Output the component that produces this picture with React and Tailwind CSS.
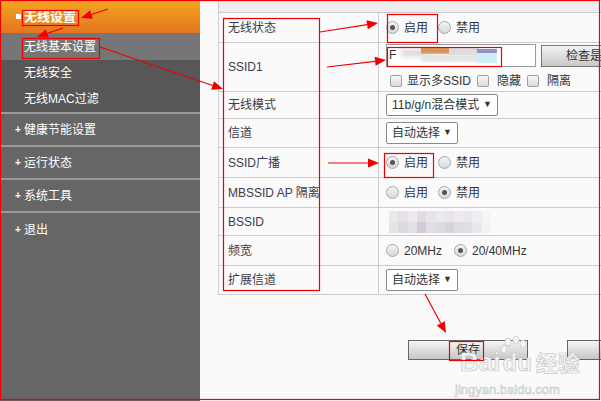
import React from 'react'

const font = { fontFamily: '"Liberation Sans", "Noto Sans CJK SC", sans-serif' }

function Radio({ on }) {
  return (
    <span className="inline-flex items-center justify-center w-[13px] h-[13px] rounded-full border border-[#a8a8a8] bg-gradient-to-b from-[#f4f4f4] to-[#d8d8d8]">
      {on && <span className="w-[5px] h-[5px] rounded-full bg-[#555]" />}
    </span>
  )
}

function Check() {
  return <span className="inline-block w-[12px] h-[12px] rounded-[2px] border border-[#a0a0a0] bg-gradient-to-b from-[#f6f6f6] to-[#dcdcdc]" />
}

function Select({ label, w }) {
  return (
    <div className={`${w} h-[22px] border border-[#8a8a8a] rounded-[2px] bg-white flex items-center justify-between px-[5px] text-[12px] text-[#333] whitespace-nowrap`}>
      <span>{label}</span>
      <span className="text-[9px]">▼</span>
    </div>
  )
}

function RadioPair({ a, b, first, gap = 'gap-[10px]' }) {
  return (
    <div className={`flex items-center ${gap} text-[12px] text-[#333]`}>
      <span className="flex items-center gap-[5px]"><Radio on={first} />{a}</span>
      <span className="flex items-center gap-[5px]"><Radio on={!first} />{b}</span>
    </div>
  )
}

const rows = [
  ['无线状态', 'h-[30px]', <div className="pl-[7px]"><RadioPair a="启用" b="禁用" first /></div>],
  ['SSID1', 'h-[49px]', (
    <div className="pl-[7px] flex flex-col gap-[5px]">
      <div className="flex gap-[5px] items-center">
        <div className="relative w-[150px] h-[23px] border border-[#999] bg-white overflow-hidden text-[12px] text-[#333] pl-[2px] leading-[21px]">
          F
          <div className="absolute left-[14px] top-[4px] w-[30px] h-[8px] bg-[#ddd] blur-[2px]" />
          <div className="absolute left-[34px] top-[3px] w-[28px] h-[6px] bg-[#d7965a]" />
          <div className="absolute left-[34px] top-[9px] w-[60px] h-[8px] bg-[#e6e6e6] blur-[1px]" />
          <div className="absolute left-[62px] top-[3px] w-[30px] h-[7px] bg-[#ddd]" />
          <div className="absolute left-[90px] top-[5px] w-[20px] h-[13px] bg-[#cfeef8]" />
          <div className="absolute left-[90px] top-[4px] w-[20px] h-[4px] bg-[#8d95c8]" />
        </div>
        <div className="w-[70px] h-[22px] border border-[#777] bg-gradient-to-b from-[#f4f4f4] to-[#c8c8c8] text-[12px] text-[#333] pl-[24px] leading-[20px] whitespace-nowrap overflow-hidden">检查是否冲突</div>
      </div>
      <div className="flex items-center text-[12px] text-[#333] pl-[4px]">
        <Check /><span className="ml-[5px] mr-[6px]">显示多SSID</span>
        <Check /><span className="ml-[8px] mr-[6px]">隐藏</span>
        <Check /><span className="ml-[8px]">隔离</span>
      </div>
    </div>
  )],
  ['无线模式', 'h-[27px]', <div className="pl-[7px]"><Select label="11b/g/n混合模式" w="w-[112px]" /></div>],
  ['信道', 'h-[29px]', <div className="pl-[7px]"><Select label="自动选择" w="w-[72px]" /></div>],
  ['SSID广播', 'h-[30px]', <div className="pl-[7px]"><RadioPair a="启用" b="禁用" first /></div>],
  ['MBSSID AP 隔离', 'h-[30px]', <div className="pl-[7px]"><RadioPair a="启用" b="禁用" first={false} /></div>],
  ['BSSID', 'h-[28px]', (
    <div className="pl-[10px] grid grid-cols-11 w-[112px] h-[22px] blur-[0.5px]">
      {['#ebe9ec', '#e4e2e6', '#ece8ec', '#e0dce2', '#e6e4e8', '#ece9ee', '#e8e6ea', '#eeeaef', '#e9e8ec', '#f0eef1', '#f5f4f6',
        '#e6e4e8', '#ddd9df', '#e3e0e6', '#d2cad4', '#e0dde3', '#dddbe0', '#d6d4da', '#dfdde2', '#e1dfe4', '#e9e8ec', '#f4f3f5'].map((c, i) => (
        <span key={i} style={{ background: c }} />
      ))}
    </div>
  )],
  ['频宽', 'h-[30px]', <div className="pl-[7px]"><RadioPair a="20MHz" b="20/40MHz" first={false} gap="gap-[12px]" /></div>],
  ['扩展信道', 'h-[28px]', <div className="pl-[7px]"><Select label="自动选择" w="w-[72px]" /></div>],
]

function arrow(x1, y1, x2, y2, len = 11, half = 4.5) {
  const dx = x2 - x1, dy = y2 - y1
  const d = Math.hypot(dx, dy)
  const ux = dx / d, uy = dy / d
  const bx = x2 - ux * len, by = y2 - uy * len
  const pts = `${x2},${y2} ${bx - uy * half},${by + ux * half} ${bx + uy * half},${by - ux * half}`
  return { bx, by, pts }
}

const arrows = [
  [108, 9, 81, 18],
  [63, 28, 37, 37],
  [100, 47, 223, 89],
  [320, 32, 378, 23],
  [327, 67, 386, 60],
  [328, 163, 379, 163],
  [425, 294, 446, 333],
]

const boxes = [
  [22, 10, 56, 15],
  [22, 38, 77, 20],
  [223, 18, 96, 272],
  [387, 14, 50, 28],
  [387, 47, 114, 19],
  [384, 153, 49, 24],
  [449, 341, 34, 19],
]

export default function App() {
  return (
    <div className="relative w-[601px] h-[401px] overflow-hidden flex bg-[#fafafa]" style={font}>
      <aside className="w-[200px] shrink-0 bg-[#666] text-white text-[12px]">
        <div className="h-[33px] bg-gradient-to-b from-[#f2a71f] to-[#e6741f] flex items-center pl-[16px] font-bold text-[13px]">
          <span className="w-[5px] h-[5px] bg-white mr-[3px]" />无线设置
        </div>
        <div className="bg-[#575757] border-b-2 border-[#9a9a9a]">
          <div className="h-[27px] bg-[#767676] flex items-center pl-[24px]">无线基本设置</div>
          <div className="h-[26px] flex items-center pl-[24px]">无线安全</div>
          <div className="h-[26px] flex items-center pl-[24px]">无线MAC过滤</div>
        </div>
        {['健康节能设置', '运行状态', '系统工具', '退出'].map((t, i) => (
          <div key={t} className={`h-[33px] flex items-center pl-[15px] ${i < 3 ? 'border-b-2 border-[#999]' : ''}`}>
            <span className="w-[8px] text-[10px] font-bold">+</span>
            <span className="ml-[1px]">{t}</span>
          </div>
        ))}
      </aside>

      <main className="flex-1 pl-[18px] overflow-hidden">
        <div className="w-[400px] border-l border-b border-[#ccc] text-[12px] text-[#3c3c4a]">
          <div className="h-[13px] bg-[#eeeeee] border-b border-[#ccc] overflow-hidden pl-[10px]">
            <div className="-mt-[10px] leading-[12px] text-[#555]">无线网络</div>
          </div>
          {rows.map(([label, h, value]) => (
            <div key={label} className={`${h} grid grid-cols-[160px_1fr] border-b border-[#ccc] last:border-b-0`}>
              <div className="border-r border-[#ccc] flex items-center pl-[9px]">{label}</div>
              <div className="flex items-center">{value}</div>
            </div>
          ))}
        </div>
        <div className="flex mt-[45px] gap-[39px] pl-[190px]">
          <div className="w-[120px] h-[20px] shrink-0 border border-[#666] bg-gradient-to-b from-[#f6f6f6] to-[#c6c6c6] text-[12px] text-[#333] flex items-center justify-center leading-none">保存</div>
          <div className="w-[60px] h-[20px] shrink-0 border border-[#666] bg-gradient-to-b from-[#f6f6f6] to-[#c6c6c6]" />
        </div>
      </main>

      <div className="absolute left-[460px] top-[349px] flex items-end text-[26px] font-bold leading-none text-[#f4f4f4] [-webkit-text-stroke:0.7px_#c8c8c8]">
        <span>Bai</span>
        <span className="text-[24px] ml-[2px]">du</span>
        <span className="text-[22px] ml-[4px]">经验</span>
      </div>
      <div className="absolute left-[455px] top-[383px] text-[13px] text-[#eeeeee] [-webkit-text-stroke:0.5px_#c4c4c4] leading-none">jingyan.baidu.com</div>
      <svg className="absolute left-[500px] top-[336px]" width="30" height="26" viewBox="0 0 30 26">
        <g fill="#f4f4f4" stroke="#c8c8c8" strokeWidth="0.8">
          <ellipse cx="8" cy="6" rx="3" ry="4" />
          <ellipse cx="16" cy="4" rx="3" ry="4" />
          <ellipse cx="23" cy="8" rx="3" ry="4" />
          <ellipse cx="4" cy="13" rx="3" ry="4" />
        </g>
      </svg>

      <svg className="absolute inset-0 pointer-events-none" width="601" height="401">
        {boxes.map(([x, y, w, h], i) => (
          <rect key={i} x={x + 0.5} y={y + 0.5} width={w} height={h} fill="none" stroke="#e00" strokeWidth="1.2" />
        ))}
        {arrows.map(([x1, y1, x2, y2], i) => {
          const a = arrow(x1, y1, x2, y2)
          return (
            <g key={i}>
              <line x1={x1} y1={y1} x2={a.bx} y2={a.by} stroke="#e00" strokeWidth="1.2" />
              <polygon points={a.pts} fill="#e00" />
            </g>
          )
        })}
        <rect x="0.5" y="0.5" width="599" height="399" fill="none" stroke="#e00" strokeWidth="1.2" />
      </svg>
    </div>
  )
}
